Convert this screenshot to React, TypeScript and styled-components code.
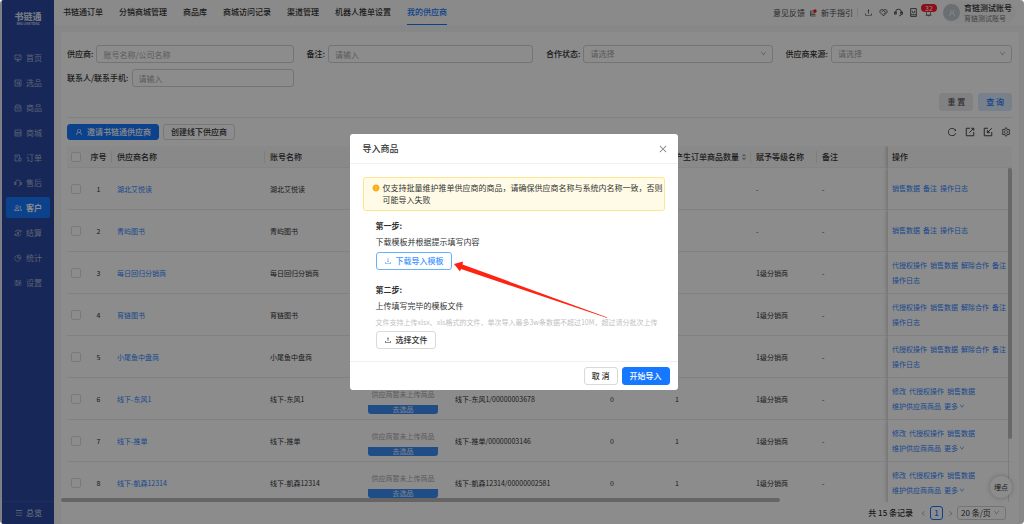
import React from 'react';
import styled, { createGlobalStyle, css } from 'styled-components';
import {
  AiFillCaretDown,
  AiFillCaretUp,
  AiFillExclamationCircle,
  AiOutlineBell,
  AiOutlineClose,
  AiOutlineCustomerService,
  AiOutlineDown,
  AiOutlineDownload,
  AiOutlineLeft,
  AiOutlineMenu,
  AiOutlinePieChart,
  AiOutlineReload,
  AiOutlineRight,
  AiOutlineSetting,
  AiOutlineUpload,
  AiOutlineUser,
} from 'react-icons/ai';

const color = {
  brand: '#1677ff',
  link: '#2f86ff',
  side: '#2a479e',
  text: '#333333',
  muted: '#a6a6a6',
  border: '#d4d4d4',
  line: '#ebebeb',
};

const GlobalStyle = createGlobalStyle`
  *, *::before, *::after { box-sizing: border-box; }
  body { margin: 0; background: #fff; }
  body, button, input, select {
    font-family: "Noto Sans CJK SC", "Noto Sans", sans-serif;
    font-size: 8px;
    line-height: 12px;
    color: ${color.text};
  }
  button { cursor: pointer; }
  a { text-decoration: none; }
  svg { display: block; flex: none; }
`;

/* ---------- shell ---------- */

const Frame = styled.div`
  position: relative;
  display: flex;
  height: 100vh;
  padding-left: 2px;
  background: #e4e9f4;
  border-radius: 4px;
  overflow: hidden;
`;

const Sidebar = styled.aside`
  display: flex;
  flex-direction: column;
  flex: none;
  width: 52px;
  background: ${color.side};
`;

const Logo = styled.div`
  display: flex;
  flex-direction: column;
  align-items: center;
  height: 47px;
  padding-top: 12px;
  color: #d5dcee;
  font-size: 9px;
  font-weight: 900;
  line-height: 10px;
`;

const LogoSub = styled.span`
  font-size: 3px;
  font-weight: 700;
  line-height: 4px;
`;

const SideNav = styled.nav`
  display: flex;
  flex: 1;
  flex-direction: column;
  gap: 4px;
  padding: 0 4px;
`;

const SideItem = styled.a<{ $active?: boolean }>`
  display: flex;
  align-items: center;
  gap: 4px;
  height: 21px;
  padding-left: 8px;
  border-radius: 2px;
  color: ${(p) => (p.$active ? '#ffffff' : '#a9b5d8')};
  font-weight: ${(p) => (p.$active ? 700 : 400)};
  background: ${(p) => (p.$active ? color.brand : 'transparent')};
`;

const SideFooter = styled.a`
  display: flex;
  align-items: center;
  gap: 3px;
  height: 23px;
  padding-left: 13px;
  border-top: 1px solid #3a56a8;
  color: #d5dcee;
`;

const Main = styled.div`
  display: flex;
  flex: 1;
  flex-direction: column;
  min-width: 0;
  background: #f6f6f6;
`;

const Header = styled.header`
  display: flex;
  align-items: stretch;
  justify-content: space-between;
  flex: none;
  height: 25px;
  padding: 0 8px 0 9px;
  background: #fcfcfc;
`;

const Tabs = styled.nav`
  display: flex;
  gap: 16px;
`;

const Tab = styled.a<{ $active?: boolean }>`
  display: flex;
  align-items: center;
  border-bottom: 1px solid ${(p) => (p.$active ? color.brand : 'transparent')};
  color: ${(p) => (p.$active ? color.brand : color.text)};
  font-weight: 500;
  white-space: nowrap;
`;

const HeaderTools = styled.div`
  display: flex;
  align-items: center;
  gap: 4px;
`;

const HeaderLink = styled.a`
  color: #4d4d4d;
  white-space: nowrap;
`;

const HeaderIcons = styled.div`
  display: flex;
  align-items: center;
  gap: 6px;
  padding-left: 6px;
  border-left: 1px solid #e2e2e2;
`;

const IconButton = styled.button`
  position: relative;
  display: flex;
  padding: 0;
  border: 0;
  background: none;
  color: #3c3c3c;
`;

const Badge = styled.span`
  position: absolute;
  left: -3px;
  bottom: 5px;
  width: 16px;
  height: 8px;
  border-radius: 4px;
  background: #ff1a28;
  color: #fff;
  font-size: 7px;
  line-height: 8px;
  text-align: center;
`;

const Account = styled.div`
  display: flex;
  align-items: center;
  gap: 4px;
  height: 22px;
  margin-left: 6px;
  padding-right: 4px;
  border-radius: 11px;
  background: #f6f6f6;
`;

const Avatar = styled.span`
  display: flex;
  align-items: center;
  justify-content: center;
  width: 17px;
  height: 17px;
  border-radius: 50%;
  background: #c3c9d1;
  color: #fff;
`;

const AccountText = styled.div`
  display: flex;
  flex-direction: column;
  line-height: 10px;
  white-space: nowrap;

  strong { font-weight: 500; }
  small { font-size: 7px; color: #7a7a7a; }
`;

const Panel = styled.main`
  display: flex;
  flex: 1;
  flex-direction: column;
  min-height: 0;
  margin: 7px 5px 0 7px;
  padding-top: 13px;
  border-radius: 4px;
  background: #fff;
`;

/* ---------- search form ---------- */

const SearchForm = styled.form`
  display: grid;
  grid-template-columns: repeat(4, minmax(0, 1fr));
  gap: 6px 13px;
  margin: 0 7px 0 6px;
  padding-bottom: 6px;
  border-bottom: 1px solid ${color.line};
`;

const Field = styled.label`
  display: flex;
  align-items: center;
  gap: 3px;
  height: 18px;
  font-weight: 500;
  white-space: nowrap;
`;

const controlStyle = css`
  width: 100%;
  height: 18px;
  padding: 0 6px;
  border: 1px solid ${color.border};
  border-radius: 3px;
  background: #fff;
  outline: none;
`;

const TextInput = styled.input`
  ${controlStyle}
  flex: 1;
  min-width: 0;
  &::placeholder { color: ${color.muted}; opacity: 1; }
`;

const SelectBox = styled.span<{ $compact?: boolean }>`
  position: relative;
  flex: ${(p) => (p.$compact ? 'none' : 1)};
  width: ${(p) => (p.$compact ? '49px' : 'auto')};
  min-width: 0;

  select {
    ${controlStyle}
    appearance: none;
    display: block;
    height: ${(p) => (p.$compact ? '14px' : '18px')};
    padding: 0 ${(p) => (p.$compact ? '3px' : '6px')};
    color: ${(p) => (p.$compact ? color.text : color.muted)};
  }

  svg {
    position: absolute;
    top: 50%;
    right: 6px;
    margin-top: -4px;
    color: #a0a0a0;
    pointer-events: none;
  }
`;

const FormActions = styled.div`
  grid-column: 1 / -1;
  display: flex;
  justify-content: flex-end;
  gap: 5px;
`;

type ButtonKind = 'default' | 'primary' | 'outline' | 'soft' | 'grey';

const buttonKinds: Record<ButtonKind, ReturnType<typeof css>> = {
  default: css`background: #fff; border-color: #d9d9d9; color: ${color.text};`,
  primary: css`background: ${color.brand}; border-color: ${color.brand}; color: #fff;`,
  outline: css`background: #fff; border-color: #69b1ff; color: #4096ff;`,
  soft: css`background: #dbeafd; border-color: #dbeafd; color: ${color.brand};`,
  grey: css`background: #ebecef; border-color: #ebecef; color: #555;`,
};

const Button = styled.button<{ $kind?: ButtonKind; $small?: boolean }>`
  display: inline-flex;
  align-items: center;
  justify-content: center;
  gap: 4px;
  height: ${(p) => (p.$small ? '16px' : '18px')};
  padding: 0 7px;
  border: 1px solid;
  border-radius: 3px;
  font-weight: 500;
  white-space: nowrap;
  ${(p) => buttonKinds[p.$kind ?? 'default']}
`;

const Toolbar = styled.div`
  display: flex;
  align-items: center;
  gap: 4px;
  margin: 0 7px 0 6px;
  padding: 6px 0;
`;

const ToolbarIcons = styled.div`
  display: flex;
  gap: 8px;
  margin-left: auto;
  padding-right: 1px;
`;

/* ---------- table ---------- */

const TableArea = styled.div`
  position: relative;
  flex: 1;
  min-height: 0;
  padding: 0 7px 0 6px;
  overflow: hidden;
`;

const Table = styled.table`
  width: 100%;
  table-layout: fixed;
  border-collapse: separate;
  border-spacing: 0;
`;

const pinned = css`
  position: relative;
  padding-left: 4px;
  box-shadow: -2px 0 3px rgba(0, 0, 0, 0.16);
  clip-path: inset(0 0 0 -6px);
`;

const HeadCell = styled.th<{ $divider?: boolean; $center?: boolean; $fixed?: boolean }>`
  height: 22px;
  padding: 0 ${(p) => (p.$center ? '0' : '5px')};
  border-bottom: 1px solid #f0f0f0;
  background: #f9f9f9;
  ${(p) =>
    p.$divider &&
    css`
      background: linear-gradient(#e6e6e6, #e6e6e6) right center / 1px 12px no-repeat #f9f9f9;
    `}
  ${(p) => p.$fixed && pinned}
  font-weight: 500;
  text-align: ${(p) => (p.$center ? 'center' : 'left')};
  white-space: nowrap;
`;

const Cell = styled.td<{ $center?: boolean; $fixed?: boolean }>`
  height: 42px;
  padding: 0 ${(p) => (p.$center ? '0' : '5px')};
  border-bottom: 1px solid ${color.line};
  background: #fff;
  font-size: 7px;
  text-align: ${(p) => (p.$center ? 'center' : 'left')};
  white-space: nowrap;
  ${(p) => p.$fixed && pinned}

  a { color: ${color.link}; }
`;

const Checkbox = styled.input`
  appearance: none;
  display: block;
  width: 10px;
  height: 10px;
  margin: 0 auto;
  border: 1px solid #dcdcdc;
  border-radius: 2px;
  background: #fff;
`;

const Sortable = styled.span`
  display: flex;
  align-items: center;
  gap: 2px;
`;

const SortIcons = styled.span`
  display: flex;
  flex-direction: column;
  color: #a8a8a8;
  svg { margin: -1px 0; }
`;

const Stock = styled.div`
  display: flex;
  flex-direction: column;
  width: 70px;
  height: 31px;
  color: ${color.muted};
  text-align: center;
  line-height: 22px;
`;

const StockButton = styled.button`
  height: 9px;
  padding: 0;
  border: 0;
  border-radius: 0 0 3px 3px;
  background: #3d8df5;
  color: #e8f1ff;
  font-size: 7px;
  line-height: 9px;
`;

const Actions = styled.div`
  display: flex;
  flex-wrap: wrap;
  gap: 0 3px;
  line-height: 15px;
  a { display: flex; align-items: center; gap: 1px; }
`;

const VerticalTrack = styled.div`
  position: absolute;
  top: 22px;
  right: 7px;
  bottom: 0;
  width: 4px;
  border-left: 1px solid #e2e2e2;
`;

const VerticalThumb = styled.div`
  width: 4px;
  height: 81%;
  margin-left: -1px;
  border-radius: 2px;
  background: #bdbdbd;
`;

const HorizontalThumb = styled.div`
  position: absolute;
  left: 0;
  bottom: 0;
  width: 75%;
  height: 4px;
  border-radius: 2px;
  background: #b8b8b8;
`;

const Pagination = styled.footer`
  display: flex;
  align-items: center;
  justify-content: flex-end;
  gap: 2px;
  flex: none;
  height: 22px;
  padding-right: 13px;
`;

const Total = styled.span`
  padding-right: 3px;
  font-weight: 500;
`;

const PageButton = styled.button<{ $current?: boolean }>`
  display: flex;
  align-items: center;
  justify-content: center;
  width: ${(p) => (p.$current ? '13px' : '10px')};
  height: 14px;
  padding: 0;
  border: 1px solid ${(p) => (p.$current ? color.brand : 'transparent')};
  border-radius: 3px;
  background: none;
  color: ${(p) => (p.$current ? color.brand : '#9a9a9a')};
  font-weight: 500;
`;

const FloatButton = styled.button`
  position: absolute;
  right: 12px;
  bottom: 26px;
  width: 22px;
  height: 22px;
  padding: 0;
  border: 0;
  border-radius: 50%;
  background: #fff;
  box-shadow: 0 0 5px rgba(0, 0, 0, 0.25);
  font-size: 7px;
`;

/* ---------- modal ---------- */

const Mask = styled.div`
  position: absolute;
  inset: 0;
  display: flex;
  align-items: center;
  justify-content: center;
  padding-left: 3px;
  background: rgba(0, 0, 0, 0.45);
`;

const Modal = styled.section`
  position: relative;
  width: 328px;
  border-radius: 3px;
  background: #fff;
`;

const ModalHeader = styled.header`
  display: flex;
  align-items: center;
  justify-content: space-between;
  height: 30px;
  padding: 0 10px 0 13px;
  border-bottom: 1px solid #f0f0f0;

  h2 { margin: 0; font-size: 9px; font-weight: 500; }
  button { color: #808080; }
`;

const ModalBody = styled.div`
  padding: 13px 13px 7px;
`;

const Alert = styled.div`
  display: flex;
  gap: 3px;
  padding: 4px 0 4px 8px;
  border: 1px solid #ffe58f;
  border-radius: 3px;
  background: #fffbe6;

  svg { margin-top: 2px; color: #faad14; }
  p { margin: 0; }
`;

const Step = styled.div`
  padding: 9px 13px 5px;

  h3 { margin: 0 0 4px; font-size: 8px; font-weight: 700; line-height: 12px; }
  p { margin: 0 0 4px; }
  small {
    display: block;
    margin-bottom: 3px;
    color: #bfbfbf;
    font-size: 7px;
    line-height: 12px;
    white-space: nowrap;
  }
`;

const ModalFooter = styled.footer`
  display: flex;
  justify-content: flex-end;
  gap: 4px;
  padding: 5px 8px;
  border-top: 1px solid #f0f0f0;
`;

const Arrow = styled.svg`
  position: absolute;
  top: 126px;
  left: 103px;
  pointer-events: none;
`;

/* ---------- line icons ---------- */

const shapes = {
  home: 'M2 2h12v9H2zM5 14h6M8 11v3M5 7l2 2 4-4',
  pick: 'M2 2h12v12H2zM6 6h5v4H6zM10 10l2 2M2 5h2',
  goods: 'M2 6h12v8H2zM2 6l2-4h8l2 4M5 8c1 3 5 3 6 0',
  mall: 'M2 2h12v12H2zM2 7h12M2 10h12M5 12h2',
  order: 'M9 14H2V2h9v5M5 5h3M5 8h2M10 8h4v6h-4z',
  customer: 'M6 3a2.500 2.500 0 1 0 .1 0M1 13c0-5 9-5 9 0zM11 4a2 2 0 0 1 0 4M12 9c2 1 3 2 3 4h-3',
  settle: 'M14 6A6.500 6.500 0 0 0 2 6M2 10a6.500 6.500 0 0 0 12 0M14 2v4h-3M2 14v-4h3M6 5l2 3 2-3M8 8v4M6 9h4',
  setup: 'M1 4h14M1 8h14M1 12h14M5 2v4M11 6v4M6 10v4',
  service: 'M3 9V7a5 5 0 0 1 10 0v2M3 7H1v4h3V7zM13 7h2v4h-3V7zM13 11c0 2-2 3-4 3',
  guide: 'M3 4h9v4H3zM3 11h10M3 14h10M3 8v6',
  care: 'M8 14L2 8c-2-4 3-7 6-4 3-3 8 0 6 4zM5 7l3-3 4 4M8 11l3-3',
  book: 'M3 1h10v14H3zM3 12h10M6 5v2c0 2 4 2 4 0V5',
  exportBox: 'M8 2H2v12h12V8M7 9l7-7M10 2h4v4',
  importBox: 'M8 2H2v12h12V8M14 2L7 9M7 5v4h4',
};

type ShapeName = keyof typeof shapes;

const Glyph = ({ name, size = 8 }: { name: ShapeName; size?: number }) => (
  <svg width={size} height={size} viewBox="0 0 16 16" fill="none" stroke="currentColor" strokeWidth="1.500" aria-hidden="true">
    <path d={shapes[name]} />
  </svg>
);

/* ---------- data ---------- */

const sideItems: { label: string; icon: React.ReactNode; active?: boolean }[] = [
  { label: '首页', icon: <Glyph name="home" /> },
  { label: '选品', icon: <Glyph name="pick" /> },
  { label: '商品', icon: <Glyph name="goods" /> },
  { label: '商城', icon: <Glyph name="mall" /> },
  { label: '订单', icon: <Glyph name="order" /> },
  { label: '售后', icon: <Glyph name="service" /> },
  { label: '客户', icon: <Glyph name="customer" />, active: true },
  { label: '结算', icon: <Glyph name="settle" /> },
  { label: '统计', icon: <AiOutlinePieChart size={8} /> },
  { label: '设置', icon: <Glyph name="setup" /> },
];

const tabs = ['书链通订单', '分销商城管理', '商品库', '商城访问记录', '渠道管理', '机器人推单设置', '我的供应商'];

const basicActions = ['销售数据', '备注', '操作日志'];
const linkedActions = ['代授权操作', '销售数据', '解除合作', '备注', '操作日志'];
const offlineActions = ['修改', '代授权操作', '销售数据', '维护供应商商品', '更多'];

interface Supplier {
  name: string;
  level: string;
  actions: string[];
  code?: string;
}

const suppliers: Supplier[] = [
  { name: '湖北艾悦读', level: '-', actions: basicActions },
  { name: '青屿图书', level: '-', actions: basicActions },
  { name: '每日回归分销商', level: '1级分销商', actions: linkedActions },
  { name: '育链图书', level: '1级分销商', actions: linkedActions },
  { name: '小尾鱼中盘商', level: '1级分销商', actions: linkedActions },
  { name: '线下-东风1', level: '1级分销商', actions: offlineActions, code: '00000003678' },
  { name: '线下-推单', level: '1级分销商', actions: offlineActions, code: '00000003146' },
  { name: '线下-凱森12314', level: '1级分销商', actions: offlineActions, code: '00000002581' },
];

const columnWidths = [18, 27, 153, 98, 87, undefined, 65, 81, 66, 71, 124];

const SupplierRow = ({ supplier, index }: { supplier: Supplier; index: number }) => (
  <tr>
    <Cell $center>
      <Checkbox type="checkbox" aria-label={supplier.name} />
    </Cell>
    <Cell $center>{index}</Cell>
    <Cell>
      <a href="#supplier">{supplier.name}</a>
    </Cell>
    <Cell>{supplier.name}</Cell>
    <Cell>
      {supplier.code && (
        <Stock>
          供应商暂未上传商品
          <StockButton type="button">去选品</StockButton>
        </Stock>
      )}
    </Cell>
    <Cell>{supplier.code && `${supplier.name}/${supplier.code}`}</Cell>
    <Cell>{supplier.code && '0'}</Cell>
    <Cell>{supplier.code && '1'}</Cell>
    <Cell>{supplier.level}</Cell>
    <Cell>-</Cell>
    <Cell $fixed>
      <Actions>
        {supplier.actions.map((action) => (
          <a href="#action" key={action}>
            {action}
            {action === '更多' && <AiOutlineDown size={6} />}
          </a>
        ))}
      </Actions>
    </Cell>
  </tr>
);

const SelectField = ({ label }: { label: string }) => (
  <Field>
    {label}
    <SelectBox>
      <select defaultValue="">
        <option value="">请选择</option>
      </select>
      <AiOutlineDown size={7} />
    </SelectBox>
  </Field>
);

const ImportModal = () => (
  <Mask>
    <Modal role="dialog" aria-labelledby="import-title">
      <ModalHeader>
        <h2 id="import-title">导入商品</h2>
        <IconButton type="button" aria-label="关闭">
          <AiOutlineClose size={10} />
        </IconButton>
      </ModalHeader>
      <ModalBody>
        <Alert role="alert">
          <AiFillExclamationCircle size={8} />
          <p>仅支持批量维护推单供应商的商品，请确保供应商名称与系统内名称一致，否则可能导入失败</p>
        </Alert>
        <Step>
          <h3>第一步:</h3>
          <p>下载模板并根据提示填写内容</p>
          <Button type="button" $kind="outline">
            <AiOutlineDownload size={8} />
            下载导入模板
          </Button>
        </Step>
        <Step>
          <h3>第二步:</h3>
          <p>上传填写完毕的模板文件</p>
          <small>文件支持上传xlsx、xls格式的文件，单次导入最多3w条数据不超过10M，超过请分批次上传</small>
          <Button type="button">
            <AiOutlineUpload size={8} />
            选择文件
          </Button>
        </Step>
      </ModalBody>
      <ModalFooter>
        <Button type="button">取 消</Button>
        <Button type="button" $kind="primary">开始导入</Button>
      </ModalFooter>
      <Arrow width="158" height="60" viewBox="0 0 158 60" aria-hidden="true">
        <path d="M1 4L10 1.500 9.500 4.500 154.500 57.500 153.500 57.800 8 9 7 11.500Z" fill="#ff2313" />
      </Arrow>
    </Modal>
  </Mask>
);

export default function App() {
  return (
    <>
      <GlobalStyle />
      <Frame>
        <Sidebar>
          <Logo>
            书链通
            <LogoSub>SHU LIAN TONG</LogoSub>
          </Logo>
          <SideNav>
            {sideItems.map((item) => (
              <SideItem href="#nav" key={item.label} $active={item.active}>
                {item.icon}
                {item.label}
              </SideItem>
            ))}
          </SideNav>
          <SideFooter href="#overview">
            <AiOutlineMenu size={8} />
            总览
          </SideFooter>
        </Sidebar>

        <Main>
          <Header>
            <Tabs>
              {tabs.map((tab) => (
                <Tab href="#tab" key={tab} $active={tab === '我的供应商'}>
                  {tab}
                </Tab>
              ))}
            </Tabs>
            <HeaderTools>
              <HeaderLink href="#feedback">意见反馈</HeaderLink>
              <svg width="8" height="8" viewBox="0 0 16 16" fill="none" stroke="#555" strokeWidth="1.500" aria-hidden="true">
                <path d={shapes.guide} />
                <circle cx="12" cy="4" r="3.500" fill="#ff1a28" stroke="none" />
              </svg>
              <HeaderLink href="#guide">新手指引</HeaderLink>
              <HeaderIcons>
                <IconButton type="button" aria-label="上传">
                  <AiOutlineUpload size={9} />
                </IconButton>
                <IconButton type="button" aria-label="关怀">
                  <Glyph name="care" size={9} />
                </IconButton>
                <IconButton type="button" aria-label="客服">
                  <Glyph name="service" size={9} />
                </IconButton>
                <IconButton type="button" aria-label="手册">
                  <Glyph name="book" size={9} />
                </IconButton>
                <IconButton type="button" aria-label="消息">
                  <AiOutlineBell size={9} />
                  <Badge>32</Badge>
                </IconButton>
              </HeaderIcons>
              <Account>
                <Avatar>
                  <AiOutlineUser size={8} />
                </Avatar>
                <AccountText>
                  <strong>育链测试账号</strong>
                  <small>育链测试账号</small>
                </AccountText>
              </Account>
            </HeaderTools>
          </Header>

          <Panel>
            <SearchForm>
              <Field>
                供应商:
                <TextInput placeholder="账号名称/公司名称" />
              </Field>
              <Field>
                备注:
                <TextInput placeholder="请输入" />
              </Field>
              <SelectField label="合作状态:" />
              <SelectField label="供应商来源:" />
              <Field>
                联系人/联系手机:
                <TextInput placeholder="请输入" />
              </Field>
              <FormActions>
                <Button type="reset" $kind="grey">重 置</Button>
                <Button type="button" $kind="soft">查 询</Button>
              </FormActions>
            </SearchForm>

            <Toolbar>
              <Button type="button" $kind="primary" $small>
                <AiOutlineUser size={8} />
                邀请书链通供应商
              </Button>
              <Button type="button" $small>创建线下供应商</Button>
              <ToolbarIcons>
                <IconButton type="button" aria-label="刷新">
                  <AiOutlineReload size={10} />
                </IconButton>
                <IconButton type="button" aria-label="导出">
                  <Glyph name="exportBox" size={10} />
                </IconButton>
                <IconButton type="button" aria-label="导入">
                  <Glyph name="importBox" size={10} />
                </IconButton>
                <IconButton type="button" aria-label="设置">
                  <AiOutlineSetting size={10} />
                </IconButton>
              </ToolbarIcons>
            </Toolbar>

            <TableArea>
              <Table>
                <colgroup>
                  {columnWidths.map((width, i) => (
                    <col key={i} width={width} />
                  ))}
                </colgroup>
                <thead>
                  <tr>
                    <HeadCell $center>
                      <Checkbox type="checkbox" aria-label="全选" />
                    </HeadCell>
                    <HeadCell $center $divider>序号</HeadCell>
                    <HeadCell $divider>供应商名称</HeadCell>
                    <HeadCell>账号名称</HeadCell>
                    <HeadCell />
                    <HeadCell />
                    <HeadCell />
                    <HeadCell $divider>
                      <Sortable>
                        产生订单商品数量
                        <SortIcons>
                          <AiFillCaretUp size={6} />
                          <AiFillCaretDown size={6} />
                        </SortIcons>
                      </Sortable>
                    </HeadCell>
                    <HeadCell $divider>赋予等级名称</HeadCell>
                    <HeadCell>备注</HeadCell>
                    <HeadCell $fixed>操作</HeadCell>
                  </tr>
                </thead>
                <tbody>
                  {suppliers.map((supplier, i) => (
                    <SupplierRow key={supplier.name} supplier={supplier} index={i + 1} />
                  ))}
                </tbody>
              </Table>
              <VerticalTrack>
                <VerticalThumb />
              </VerticalTrack>
              <HorizontalThumb />
            </TableArea>

            <Pagination>
              <Total>共 15 条记录</Total>
              <PageButton type="button" aria-label="上一页">
                <AiOutlineLeft size={7} />
              </PageButton>
              <PageButton type="button" $current>1</PageButton>
              <PageButton type="button" aria-label="下一页">
                <AiOutlineRight size={7} />
              </PageButton>
              <SelectBox $compact>
                <select aria-label="每页条数">
                  <option>20 条/页</option>
                </select>
                <AiOutlineDown size={7} />
              </SelectBox>
            </Pagination>
          </Panel>
        </Main>
        <FloatButton type="button">埋点</FloatButton>
        <ImportModal />
      </Frame>
    </>
  );
}
